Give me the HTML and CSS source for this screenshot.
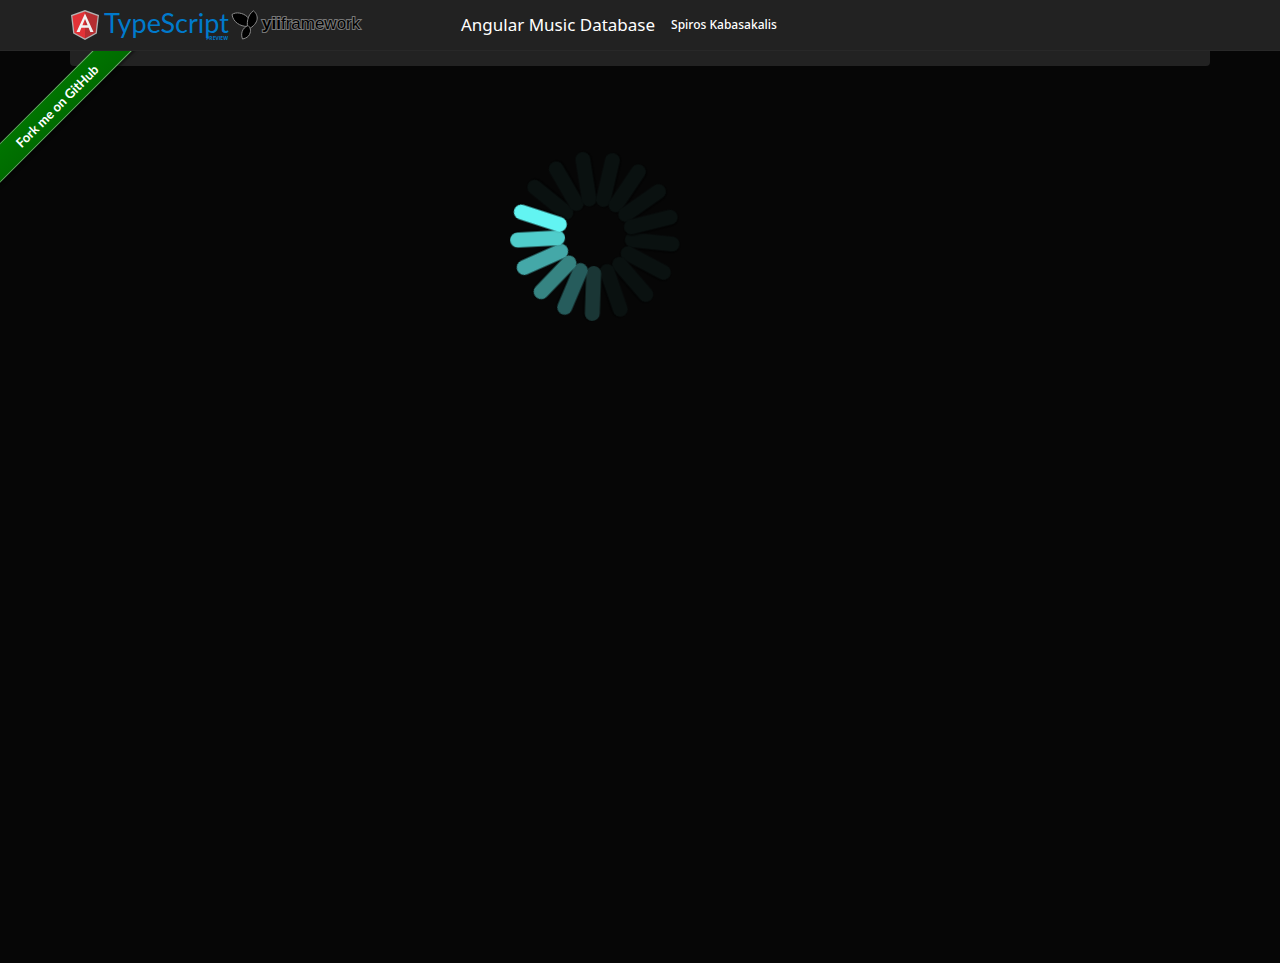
FILE: index.html
```html
<!DOCTYPE html>
<html lang="en">
<head>
<meta charset="utf-8">
<title>Angular Music Database</title>
<link rel="stylesheet" href="styles.css">
</head>
<body>
<header class="navbar">
  <div class="container navbar-inner">
    <div class="logos">
      <a class="logo" href="#" aria-label="AngularJS">
        <svg width="30" height="30" viewBox="0 0 30 30">
          <path fill="#b3b3b3" d="M15 0 29 5 26.800 23.500 15 30 3.200 23.500 1 5z"/>
          <path fill="#b52e31" d="M15 1.400 27.600 5.900 25.600 22.700 15 28.500z"/>
          <path fill="#e23237" d="M15 1.400 2.400 5.900 4.400 22.700 15 28.500z"/>
          <path fill="#f2f2f2" fill-rule="evenodd" d="M15 3.500 6.500 22h3.200l1.700-4.200h7.200l1.700 4.200h3.200zM15 9l2.600 6.300h-5.200z"/>
        </svg>
      </a>
      <a class="logo typescript" href="#"><span class="ts-name">TypeScript</span><span class="ts-tag">PREVIEW</span></a>
      <a class="logo yii" href="#">
        <svg width="28" height="30" viewBox="0 0 28 30" fill="#000" stroke="#8a8a8a" stroke-width="1">
          <path d="M1 4.500C5 1.500 12 3 16 6.500 19.500 10 19.500 13 16.500 16.500 9 16.500 2 12 1 4.500z"/>
          <path d="M22.500 .8C27.500 5 29 13 17 19.500 15.500 14 16 5 22.500 .8z"/>
          <path d="M17 15.500C20 18 20.500 22 17.500 26 15.500 28 13.500 28.500 11.500 29 9.500 24 11 18 17 15.500z"/>
        </svg>
        <span class="yii-name">yii<span class="yii-light">framework</span></span>
      </a>
    </div>
    <a class="brand" href="#">Angular Music Database</a>
    <a class="author" href="#">Spiros Kabasakalis</a>
  </div>
</header>
<div class="ribbon-box"><a class="ribbon" href="#">Fork me on GitHub</a></div>
<main class="container">
  <div class="panel"></div>
  <div class="loading">
    <svg class="spinner" width="190" height="190" viewBox="-95 -95 190 190" role="img" aria-label="Loading">
      <defs><rect id="bar" x="30" y="-7.500" width="55" height="15" rx="7.500"/></defs>
      <g class="bars">
        <use href="#bar" class="dim" transform="rotate(6)"/>
        <use href="#bar" class="dim" transform="rotate(28)"/>
        <use href="#bar" class="dim" transform="rotate(49)"/>
        <use href="#bar" class="dim" transform="rotate(71)"/>
        <use href="#bar" class="s1" transform="rotate(92)"/>
        <use href="#bar" class="s2" transform="rotate(113)"/>
        <use href="#bar" class="s3" transform="rotate(134)"/>
        <use href="#bar" class="s4" transform="rotate(156)"/>
        <use href="#bar" class="s5" transform="rotate(177)"/>
        <use href="#bar" class="dim" transform="rotate(219)"/>
        <use href="#bar" class="s6" transform="rotate(198)"/>
        <use href="#bar" class="dim" transform="rotate(240)"/>
        <use href="#bar" class="dim" transform="rotate(261)"/>
        <use href="#bar" class="dim" transform="rotate(283)"/>
        <use href="#bar" class="dim" transform="rotate(304)"/>
        <use href="#bar" class="dim" transform="rotate(325)"/>
        <use href="#bar" class="dim" transform="rotate(346)"/>
      </g>
    </svg>
  </div>
</main>
</body>
</html>
```
FILE: styles.css
```css
* { box-sizing: border-box; }
body {
  margin: 0;
  min-height: 100vh;
  background: #060606;
  color: #fff;
  font-family: "Noto Sans", sans-serif;
}
a { color: #fff; text-decoration: none; }
.container { max-width: 1140px; margin: 0 auto; }
.navbar { background: #222; border-bottom: 1px solid #282828; }
.navbar-inner { display: flex; align-items: center; height: 50px; }
.logos { display: flex; width: 391px; }
.logo { display: flex; height: 30px; }
.typescript { flex-direction: column; width: 124px; margin: 0 3px 0 4px; }
.ts-name { font: 27px/26px Lato, sans-serif; color: #007acc; }
.ts-tag { align-self: flex-end; font: bold 5px/5px "Open Sans", sans-serif; color: #007acc; }
.yii-name {
  margin-left: 3px;
  font: bold 17px/28px "Liberation Sans", sans-serif;
  color: #000;
  -webkit-text-stroke: 2px #777;
  paint-order: stroke;
}
.yii-light { font-weight: normal; }
.brand { font-size: 17px; line-height: 20px; }
.author { margin-left: 16px; font-size: 12px; font-weight: 500; line-height: 20px; }
.ribbon-box { position: absolute; top: 51px; left: 0; width: 150px; height: 150px; overflow: hidden; pointer-events: none; }
.ribbon {
  position: absolute;
  top: 41px;
  left: -43px;
  width: 200px;
  border: solid #6b6;
  border-width: 1px 0;
  transform: rotate(-45deg);
  background: linear-gradient(#007400, #006c00);
  box-shadow: 0 2px 3px rgba(0, 0, 0, .5);
  font: bold 13px/26px Lato, sans-serif;
  text-align: center;
  pointer-events: auto;
}
.panel { height: 15px; background: #222; border-radius: 0 0 4px 4px; }
.loading { display: flex; justify-content: center; padding: 75px 90px 0 0; }
.bars use { filter: drop-shadow(0 1px 1px #000); }
.dim { fill: #0a1110; }
.s1 { fill: #1a3635; }
.s2 { fill: #265c5c; }
.s3 { fill: #368482; }
.s4 { fill: #44a8a8; }
.s5 { fill: #50cdcb; }
.s6 { fill: #62f4f2; }
```
